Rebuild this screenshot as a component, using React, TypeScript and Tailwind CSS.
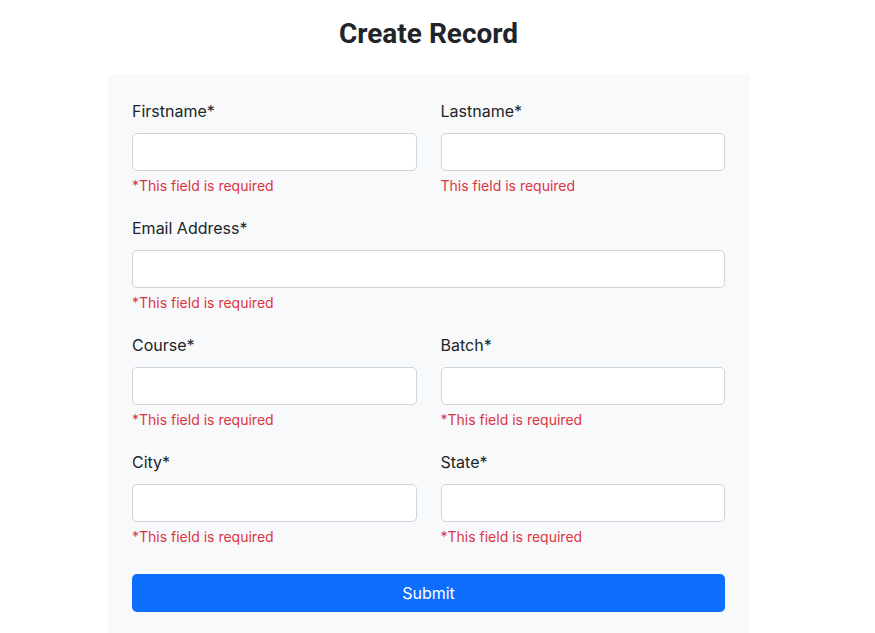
import React from "react";

const Field = ({ label, error, className = "" }: { label: string; error: string; className?: string }) => (
  <div className={`flex flex-col ${className}`}>
    <label className="text-base leading-5 text-[#212529] mb-3">{label}</label>
    <input
      type="text"
      className="h-[38px] w-full rounded-[5px] border border-[#ced4da] bg-white px-3 outline-none"
    />
    <span className="mt-1 text-sm leading-[21px] text-[#dc3545]">{error}</span>
  </div>
);

export default function App() {
  return (
    <div
      className="min-h-screen w-[857px] bg-white flex flex-col items-center"
      style={{ fontFamily: "Inter, 'Liberation Sans', sans-serif" }}
    >
      <h1
        className="mt-[16px] mb-[22px] text-[28px] leading-9 font-bold text-[#212529]"
        style={{ fontFamily: "Roboto, 'Liberation Sans', sans-serif" }}
      >
        Create Record
      </h1>
      <form className="w-[641px] bg-[#f8f9fa] px-6 pt-[27px] pb-6 flex flex-col gap-[22px]">
        <div className="grid grid-cols-2 gap-6">
          <Field label="Firstname*" error="*This field is required" />
          <Field label="Lastname*" error="This field is required" />
        </div>
        <Field label="Email Address*" error="*This field is required" />
        <div className="grid grid-cols-2 gap-6">
          <Field label="Course*" error="*This field is required" />
          <Field label="Batch*" error="*This field is required" />
        </div>
        <div className="grid grid-cols-2 gap-6">
          <Field label="City*" error="*This field is required" />
          <Field label="State*" error="*This field is required" />
        </div>
        <button
          type="button"
          className="mt-[5px] h-[38px] w-full rounded-[5px] bg-[#0d6efd] text-base text-white"
        >
          Submit
        </button>
      </form>
    </div>
  );
}
